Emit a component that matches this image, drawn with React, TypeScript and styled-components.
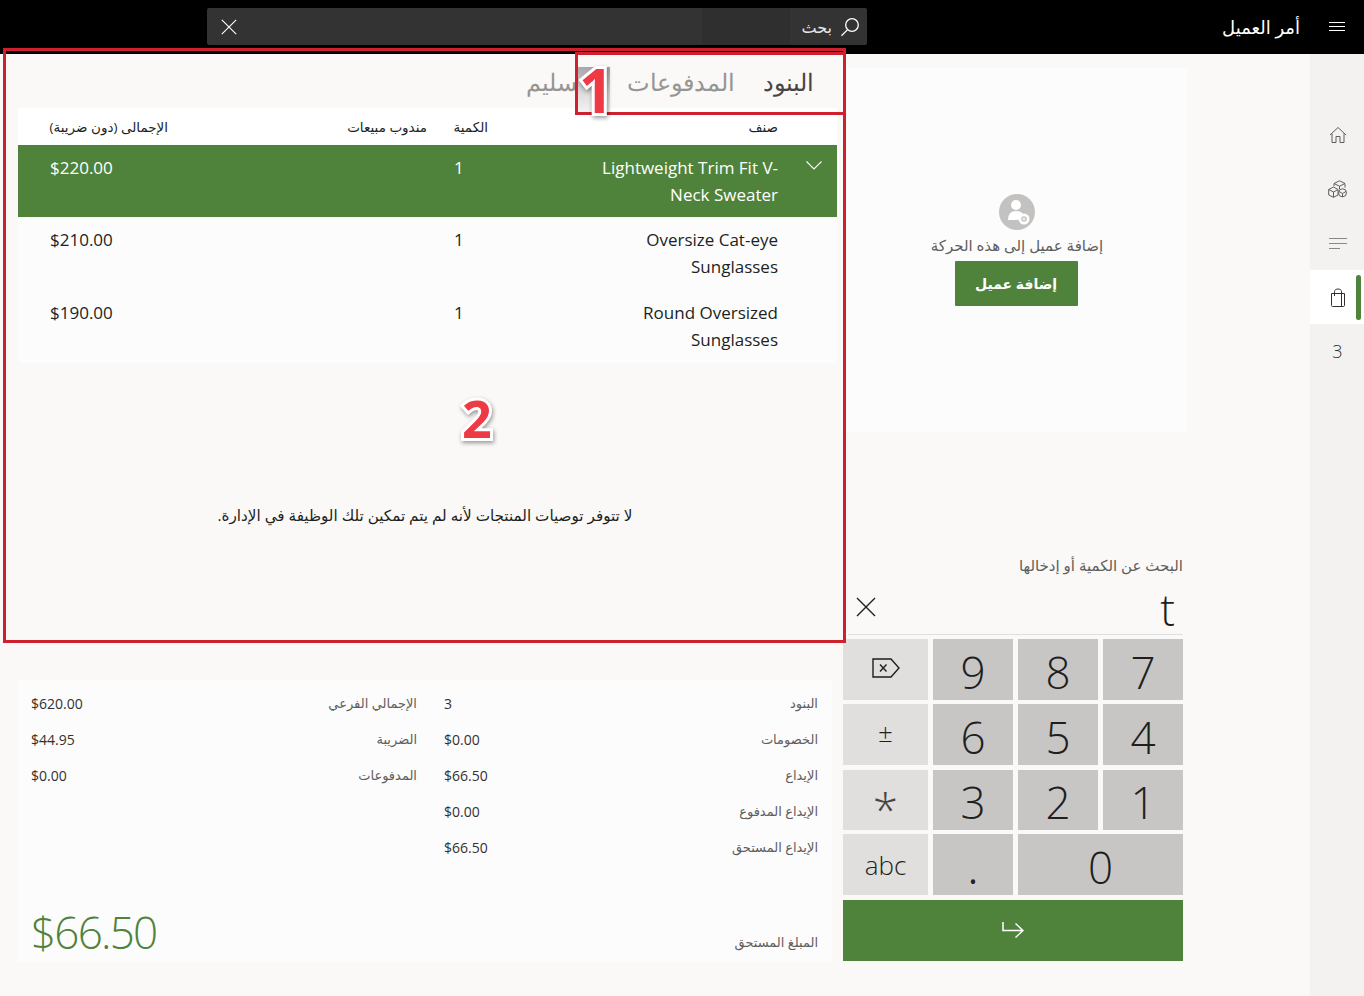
import React from "react";
import styled, { createGlobalStyle } from "styled-components";

const GREEN = "#4f833b";

const GlobalStyle = createGlobalStyle`
  html, body {
    margin: 0;
    padding: 0;
    background: #faf9f8;
  }
  body {
    font-family: "Open Sans", "DejaVu Sans", sans-serif;
    color: #201f1e;
  }
`;

const Page = styled.div`
  position: relative;
  width: 1364px;
  height: 996px;
  overflow: hidden;
  display: flex;
  flex-direction: column;
`;

const TopBar = styled.header`
  height: 54px;
  flex: none;
  background: #000;
  color: #fff;
  display: flex;
  align-items: center;
`;

const MenuButton = styled.div`
  width: 54px;
  flex: none;
  display: flex;
  justify-content: center;
`;

const Title = styled.div`
  width: 443px;
  flex: none;
  padding-right: 10px;
  box-sizing: border-box;
  font-size: 18px;
`;

const SearchBar = styled.div`
  width: 660px;
  height: 37px;
  margin-top: -1px;
  flex: none;
  border-radius: 2px;
  background: linear-gradient(to left, #333 0, #333 77px, #2f2f2f 77px, #2f2f2f 165px, #333 165px);
  display: flex;
  align-items: center;
  padding: 0 7px 0 14px;
  box-sizing: border-box;
  gap: 8px;
  font-size: 16px;
`;

const SearchText = styled.span`
  flex: 1;
  color: #e8e8e8;
`;

const Body = styled.div`
  flex: 1;
  display: flex;
  min-height: 0;
`;

const SideRail = styled.nav`
  width: 54px;
  flex: none;
  background: #f3f2f1;
  padding-top: 54px;
  box-sizing: border-box;
`;

const RailItem = styled.div<{ $active?: boolean }>`
  position: relative;
  height: 54px;
  padding-left: 1px;
  box-sizing: border-box;
  display: flex;
  align-items: center;
  justify-content: center;
  background: ${(p) => (p.$active ? "#fff" : "transparent")};
  color: #323130;
  font-size: 18px;
  font-weight: 300;
`;

const RailMark = styled.span`
  position: absolute;
  top: 5px;
  left: 46px;
  width: 5px;
  height: 45px;
  border-radius: 3px;
  background: ${GREEN};
`;

const MiddleColumn = styled.section`
  width: 344px;
  margin-right: 123px;
  flex: none;
  padding-top: 14px;
  box-sizing: border-box;
`;

const CustomerCard = styled.div`
  height: 364px;
  margin-left: 4px;
  background: #fdfcfc;
  display: flex;
  flex-direction: column;
  align-items: center;
  padding-top: 126px;
  box-sizing: border-box;
`;

const CustomerText = styled.div`
  margin-top: 5px;
  font-size: 15px;
  line-height: 20px;
  color: #605e5c;
`;

const AddButton = styled.div`
  margin: 6px 2px 0 0;
  width: 123px;
  height: 45px;
  background: ${GREEN};
  color: #fff;
  border-radius: 1px;
  font-size: 14px;
  font-weight: 700;
  display: flex;
  align-items: center;
  justify-content: center;
`;

const QtyLabel = styled.div`
  margin: 123px 4px 0 0;
  font-size: 15px;
  line-height: 20px;
  color: #605e5c;
`;

const QtyInput = styled.div`
  margin: 0 4px 0 5px;
  height: 60px;
  border-bottom: 1px solid #e1dfdd;
  box-sizing: border-box;
  display: flex;
  align-items: center;
  justify-content: space-between;
  padding: 5px 8px 0 8px;
`;

const QtyValue = styled.span`
  font-size: 44px;
  font-weight: 300;
  padding-top: 4px;
`;

const Keypad = styled.div`
  margin: 4px 4px 0 0;
  display: grid;
  grid-template-columns: 85px repeat(3, 80px);
  direction: ltr;
  grid-template-rows: 61px 61px 60px 61px 61px;
  gap: 4.4px 5px;
  width: 340px;
`;

const Key = styled.div<{ $wide?: boolean }>`
  background: #c8c6c4;
  grid-column: ${(p) => (p.$wide ? "span 2" : "auto")};
  display: flex;
  align-items: center;
  justify-content: center;
  padding-top: 5px;
  box-sizing: border-box;
  font-size: 44px;
  font-weight: 300;
  color: #201f1e;
`;

const SideKey = styled(Key)<{ $lift?: number }>`
  background: #e1dfdd;
  font-size: 26px;
  padding-top: 0;
  padding-bottom: ${(p) => p.$lift ?? 0}px;
`;

const StarKey = styled(SideKey)`
  font-size: 46px;
  line-height: 1;
  color: #484644;
  padding-top: 19px;
  padding-bottom: 0;
`;

const DotKey = styled(Key)`
  align-items: flex-end;
  padding-bottom: 6px;
  font-size: 36px;
  font-weight: 400;
  line-height: 1;
`;

const EnterKey = styled.div`
  grid-column: 1 / -1;
  background: ${GREEN};
  display: flex;
  align-items: center;
  justify-content: center;
`;

const LeftColumn = styled.section`
  width: 819px;
  margin-right: 6px;
  flex: none;
`;

const Tabs = styled.div`
  height: 54px;
  display: flex;
  align-items: center;
  gap: 28px;
  padding: 0 23px 0 0;
  overflow: hidden;
`;

const Tab = styled.div<{ $active?: boolean }>`
  font-size: 24px;
  font-weight: 300;
  color: ${(p) => (p.$active ? "#484644" : "#979593")};
`;

const TableRow = styled.div<{ $selected?: boolean; $height: number }>`
  display: grid;
  grid-template-columns: 59px 290px 34px 286px 118px 32px;
  height: ${(p) => p.$height}px;
  background: ${(p) => (p.$selected ? GREEN : "#fdfcfc")};
  color: ${(p) => (p.$selected ? "#fff" : "#201f1e")};
`;

const HeaderRow = styled(TableRow)`
  background: #fff;
  align-items: center;
  font-size: 13.500px;
  box-sizing: border-box;
`;

const HeaderTotal = styled.div`
  white-space: nowrap;
  text-align: left;
  grid-column: 5;
  direction: rtl;
`;

const HeaderSales = styled.div`
  padding-right: 27px;
  grid-column: 4;
`;

const HeaderQty = styled.div`
  white-space: nowrap;
`;

const Chevron = styled.div`
  padding: 16px 15px 0 0;
  & svg {
    display: block;
  }
`;

const Cell = styled.div`
  font-size: 17px;
  line-height: 27px;
  padding-top: 9px;
`;

const NameCell = styled(Cell)`
  max-width: 195px;
`;

const AmountCell = styled(Cell)`
  grid-column: 5;
  text-align: left;
  direction: ltr;
`;

const QtyCell = styled(Cell)`
  grid-column: 3;
  text-align: left;
`;

const Message = styled.div`
  height: 317px;
  padding: 142px 5px 0 0;
  box-sizing: border-box;
  text-align: center;
  font-size: 15.200px;
  line-height: 20px;
`;

const Summary = styled.div`
  width: 814px;
  margin-right: 5px;
  height: 282px;
  background: #fdfcfc;
  padding: 5px 0 0;
  box-sizing: border-box;
  display: flex;
  flex-direction: column;
  justify-content: space-between;
`;

const SummaryGrid = styled.div`
  display: grid;
  grid-template-columns: 401px 413px;
`;

const SummaryColumn = styled.div`
  display: flex;
  flex-direction: column;
`;

const SummaryRow = styled.div`
  height: 36px;
  display: flex;
  align-items: center;
  justify-content: space-between;
  padding: 0 14px 0 13px;
  font-size: 13px;
  color: #605e5c;
`;

const SummaryValue = styled.span`
  color: #323130;
  font-size: 14px;
  direction: ltr;
`;

const DueRow = styled.div`
  display: flex;
  justify-content: space-between;
  align-items: flex-end;
  padding: 0 14px 0 13px;
  font-size: 13px;
  color: #605e5c;
`;

const DueLabel = styled.span`
  padding-bottom: 11px;
`;

const DueAmount = styled.span`
  color: ${GREEN};
  font-size: 44px;
  font-weight: 300;
  line-height: 60px;
  letter-spacing: -1.800px;
  direction: ltr;
`;

const Callout = styled.div<{ $main?: boolean }>`
  position: absolute;
  border: 3px solid #cf2030;
  box-sizing: border-box;
  pointer-events: none;
  top: ${(p) => (p.$main ? 48 : 52)}px;
  left: ${(p) => (p.$main ? 3 : 575)}px;
  width: ${(p) => (p.$main ? 843 : 271)}px;
  height: ${(p) => (p.$main ? 595 : 63)}px;
`;

const CalloutPatch = styled.div`
  position: absolute;
  left: 578px;
  top: 67px;
  width: 32px;
  height: 46px;
  background: linear-gradient(to bottom, #a8a8a8, #dedede 60%, #f4f4f4);
`;

const CalloutNumber = styled.div<{ $first?: boolean }>`
  position: absolute;
  left: ${(p) => (p.$first ? 579 : 462)}px;
  top: ${(p) => (p.$first ? 54 : 382)}px;
  font-family: "Open Sans", sans-serif;
  font-weight: 700;
  font-size: ${(p) => (p.$first ? 60 : 52)}px;
  line-height: 72px;
  color: #ee3a45;
  -webkit-text-stroke: 6px #fff;
  paint-order: stroke fill;
  filter: drop-shadow(1px 2px 2px rgba(0, 0, 0, 0.4));
`;

const items = [
  { name: "Lightweight Trim Fit V-Neck Sweater", price: "$220.00", selected: true, height: 72 },
  { name: "Oversize Cat-eye Sunglasses", price: "$210.00", height: 73 },
  { name: "Round Oversized Sunglasses", price: "$190.00", height: 73 },
];

const totalsRight = [
  ["البنود", "3"],
  ["الخصومات", "$0.00"],
  ["الإيداع", "$66.50"],
  ["الإيداع المدفوع", "$0.00"],
  ["الإيداع المستحق", "$66.50"],
];

const totalsLeft = [
  ["الإجمالي الفرعي", "$620.00"],
  ["الضريبة", "$44.95"],
  ["المدفوعات", "$0.00"],
];

const SearchIcon = () => (
  <svg width="20" height="20" viewBox="0 0 20 20" fill="none" stroke="#fff" strokeWidth="1.300">
    <circle cx="12" cy="8" r="6.300" />
    <path d="M7.600 12.600 1.500 18.800" />
  </svg>
);

const CloseIcon = ({ size, color }: { size: number; color: string }) => (
  <svg width={size} height={size} viewBox="0 0 20 20" stroke={color} strokeWidth="1.400">
    <path d="M1 1 19 19M19 1 1 19" />
  </svg>
);

const HomeIcon = () => (
  <svg width="18" height="18" viewBox="0 0 18 18" fill="none" stroke="#605e5c" strokeWidth="1">
    <path d="M1 9 9 1.500 17 9M3 7.500V16.500H7V10.500H11V16.500H15V7.500" />
  </svg>
);

const BoxesIcon = () => (
  <svg width="19" height="18" viewBox="0 0 19 18" fill="none" stroke="#605e5c" strokeWidth="1">
    <path d="M6 3.500 11.500 .8 17 3.500V7.500M6 3.500 11.500 6.200 17 3.500M6 3.500V6M11.500 6.200V9" />
    <path d="M.7 9.500 5.500 7 10 9.500V15L5.500 17.300.7 15ZM.7 9.500 5.500 12 10 9.500M5.500 12V17.300" />
    <circle cx="14.500" cy="12.800" r="4" fill="#f3f2f1" />
    <path d="M11 11.500 14.500 13.500 18 11.500M14.500 13.500V16.800" />
  </svg>
);

const LinesIcon = () => (
  <svg width="18" height="11" viewBox="0 0 18 11" stroke="#8a8886" strokeWidth="1">
    <path d="M0 .5H18M0 5.500H18M0 10.500H11" />
  </svg>
);

const BagIcon = () => (
  <svg width="16" height="19" viewBox="0 0 16 19" fill="none" stroke="#323130" strokeWidth="1">
    <path d="M1.500 5.500H14.500V17.500C14.500 18 14 18.500 13.500 18.500H2.500C2 18.500 1.500 18 1.500 17.500Z" />
    <path d="M11.500 5.500V18.500" />
    <path d="M4.500 8V3.500C4.500 .2 11.500 .2 11.500 3.500V8" />
  </svg>
);

const ChevronIcon = () => (
  <svg width="16" height="9" viewBox="0 0 16 9" fill="none" stroke="#fff" strokeWidth="1.100">
    <path d="M.5.5 8 8 15.500.5" />
  </svg>
);

const AvatarIcon = () => (
  <svg width="36" height="36" viewBox="0 0 36 36">
    <circle cx="18" cy="18" r="18" fill="#c4c2c0" />
    <circle cx="17" cy="11" r="5" fill="#fff" />
    <path d="M9 26C9 20 12 17 17 17 20 17 23 18 24 20L19 26Z" fill="#fff" />
    <circle cx="25" cy="25" r="5.500" fill="#fff" />
    <circle cx="25" cy="25" r="2.800" fill="#c4c2c0" />
    <path d="M25 23.500V26.500M23.500 25H26.500" stroke="#fff" strokeWidth="1" />
  </svg>
);

const BackspaceIcon = () => (
  <svg width="28" height="20" viewBox="0 0 28 20" fill="none" stroke="#201f1e" strokeWidth="1.400">
    <path d="M1 1H19L27 10 19 19H1Z" />
    <path d="M8 6.500 14.500 13.500M14.500 6.500 8 13.500" />
  </svg>
);

const EnterIcon = () => (
  <svg width="22" height="18" viewBox="0 0 22 18" fill="none" stroke="#fff" strokeWidth="1.500">
    <path d="M1 1V9.500H21M13.500 2.500 21 9.500 13.500 16.500" />
  </svg>
);

export default function App() {
  return (
    <Page dir="rtl">
      <GlobalStyle />
      <TopBar>
        <MenuButton>
          <svg width="16" height="10" viewBox="0 0 16 10" stroke="#fff" strokeWidth="1">
            <path d="M0 .5H16M0 4.500H16M0 8.500H16" />
          </svg>
        </MenuButton>
        <Title>أمر العميل</Title>
        <SearchBar>
          <SearchIcon />
          <SearchText>بحث</SearchText>
          <CloseIcon size={16} color="#fff" />
        </SearchBar>
      </TopBar>
      <Body>
        <SideRail>
          <RailItem><HomeIcon /></RailItem>
          <RailItem><BoxesIcon /></RailItem>
          <RailItem><LinesIcon /></RailItem>
          <RailItem $active>
            <BagIcon />
            <RailMark />
          </RailItem>
          <RailItem>3</RailItem>
        </SideRail>
        <MiddleColumn>
          <CustomerCard>
            <AvatarIcon />
            <CustomerText>إضافة عميل إلى هذه الحركة</CustomerText>
            <AddButton>إضافة عميل</AddButton>
          </CustomerCard>
          <QtyLabel>البحث عن الكمية أو إدخالها</QtyLabel>
          <QtyInput>
            <QtyValue>t</QtyValue>
            <CloseIcon size={20} color="#201f1e" />
          </QtyInput>
          <Keypad>
            <SideKey $lift={3}><BackspaceIcon /></SideKey>
            <Key>9</Key>
            <Key>8</Key>
            <Key>7</Key>
            <SideKey $lift={5}>±</SideKey>
            <Key>6</Key>
            <Key>5</Key>
            <Key>4</Key>
            <StarKey>*</StarKey>
            <Key>3</Key>
            <Key>2</Key>
            <Key>1</Key>
            <SideKey>abc</SideKey>
            <DotKey>.</DotKey>
            <Key $wide>0</Key>
            <EnterKey><EnterIcon /></EnterKey>
          </Keypad>
        </MiddleColumn>
        <LeftColumn>
          <Tabs>
            <Tab $active>البنود</Tab>
            <Tab>المدفوعات</Tab>
            <Tab>التسليم</Tab>
          </Tabs>
          <HeaderRow $height={37}>
            <div />
            <div>صنف</div>
            <HeaderQty>الكمية</HeaderQty>
            <HeaderSales>مندوب مبيعات</HeaderSales>
            <HeaderTotal>الإجمالى (دون ضريبة)</HeaderTotal>
          </HeaderRow>
          {items.map((item) => (
            <TableRow key={item.name} $selected={item.selected} $height={item.height}>
              <Chevron>{item.selected && <ChevronIcon />}</Chevron>
              <NameCell>{item.name}</NameCell>
              <QtyCell>1</QtyCell>
              <AmountCell>{item.price}</AmountCell>
            </TableRow>
          ))}
          <Message>لا تتوفر توصيات المنتجات لأنه لم يتم تمكين تلك الوظيفة في الإدارة.</Message>
          <Summary>
            <SummaryGrid>
              <SummaryColumn>
                {totalsRight.map(([label, value]) => (
                  <SummaryRow key={label}>
                    <span>{label}</span>
                    <SummaryValue>{value}</SummaryValue>
                  </SummaryRow>
                ))}
              </SummaryColumn>
              <SummaryColumn>
                {totalsLeft.map(([label, value]) => (
                  <SummaryRow key={label}>
                    <span>{label}</span>
                    <SummaryValue>{value}</SummaryValue>
                  </SummaryRow>
                ))}
              </SummaryColumn>
            </SummaryGrid>
            <DueRow>
              <DueLabel>المبلغ المستحق</DueLabel>
              <DueAmount>$66.50</DueAmount>
            </DueRow>
          </Summary>
        </LeftColumn>
      </Body>
      <Callout $main />
      <CalloutPatch />
      <Callout />
      <CalloutNumber $first>1</CalloutNumber>
      <CalloutNumber>2</CalloutNumber>
    </Page>
  );
}
